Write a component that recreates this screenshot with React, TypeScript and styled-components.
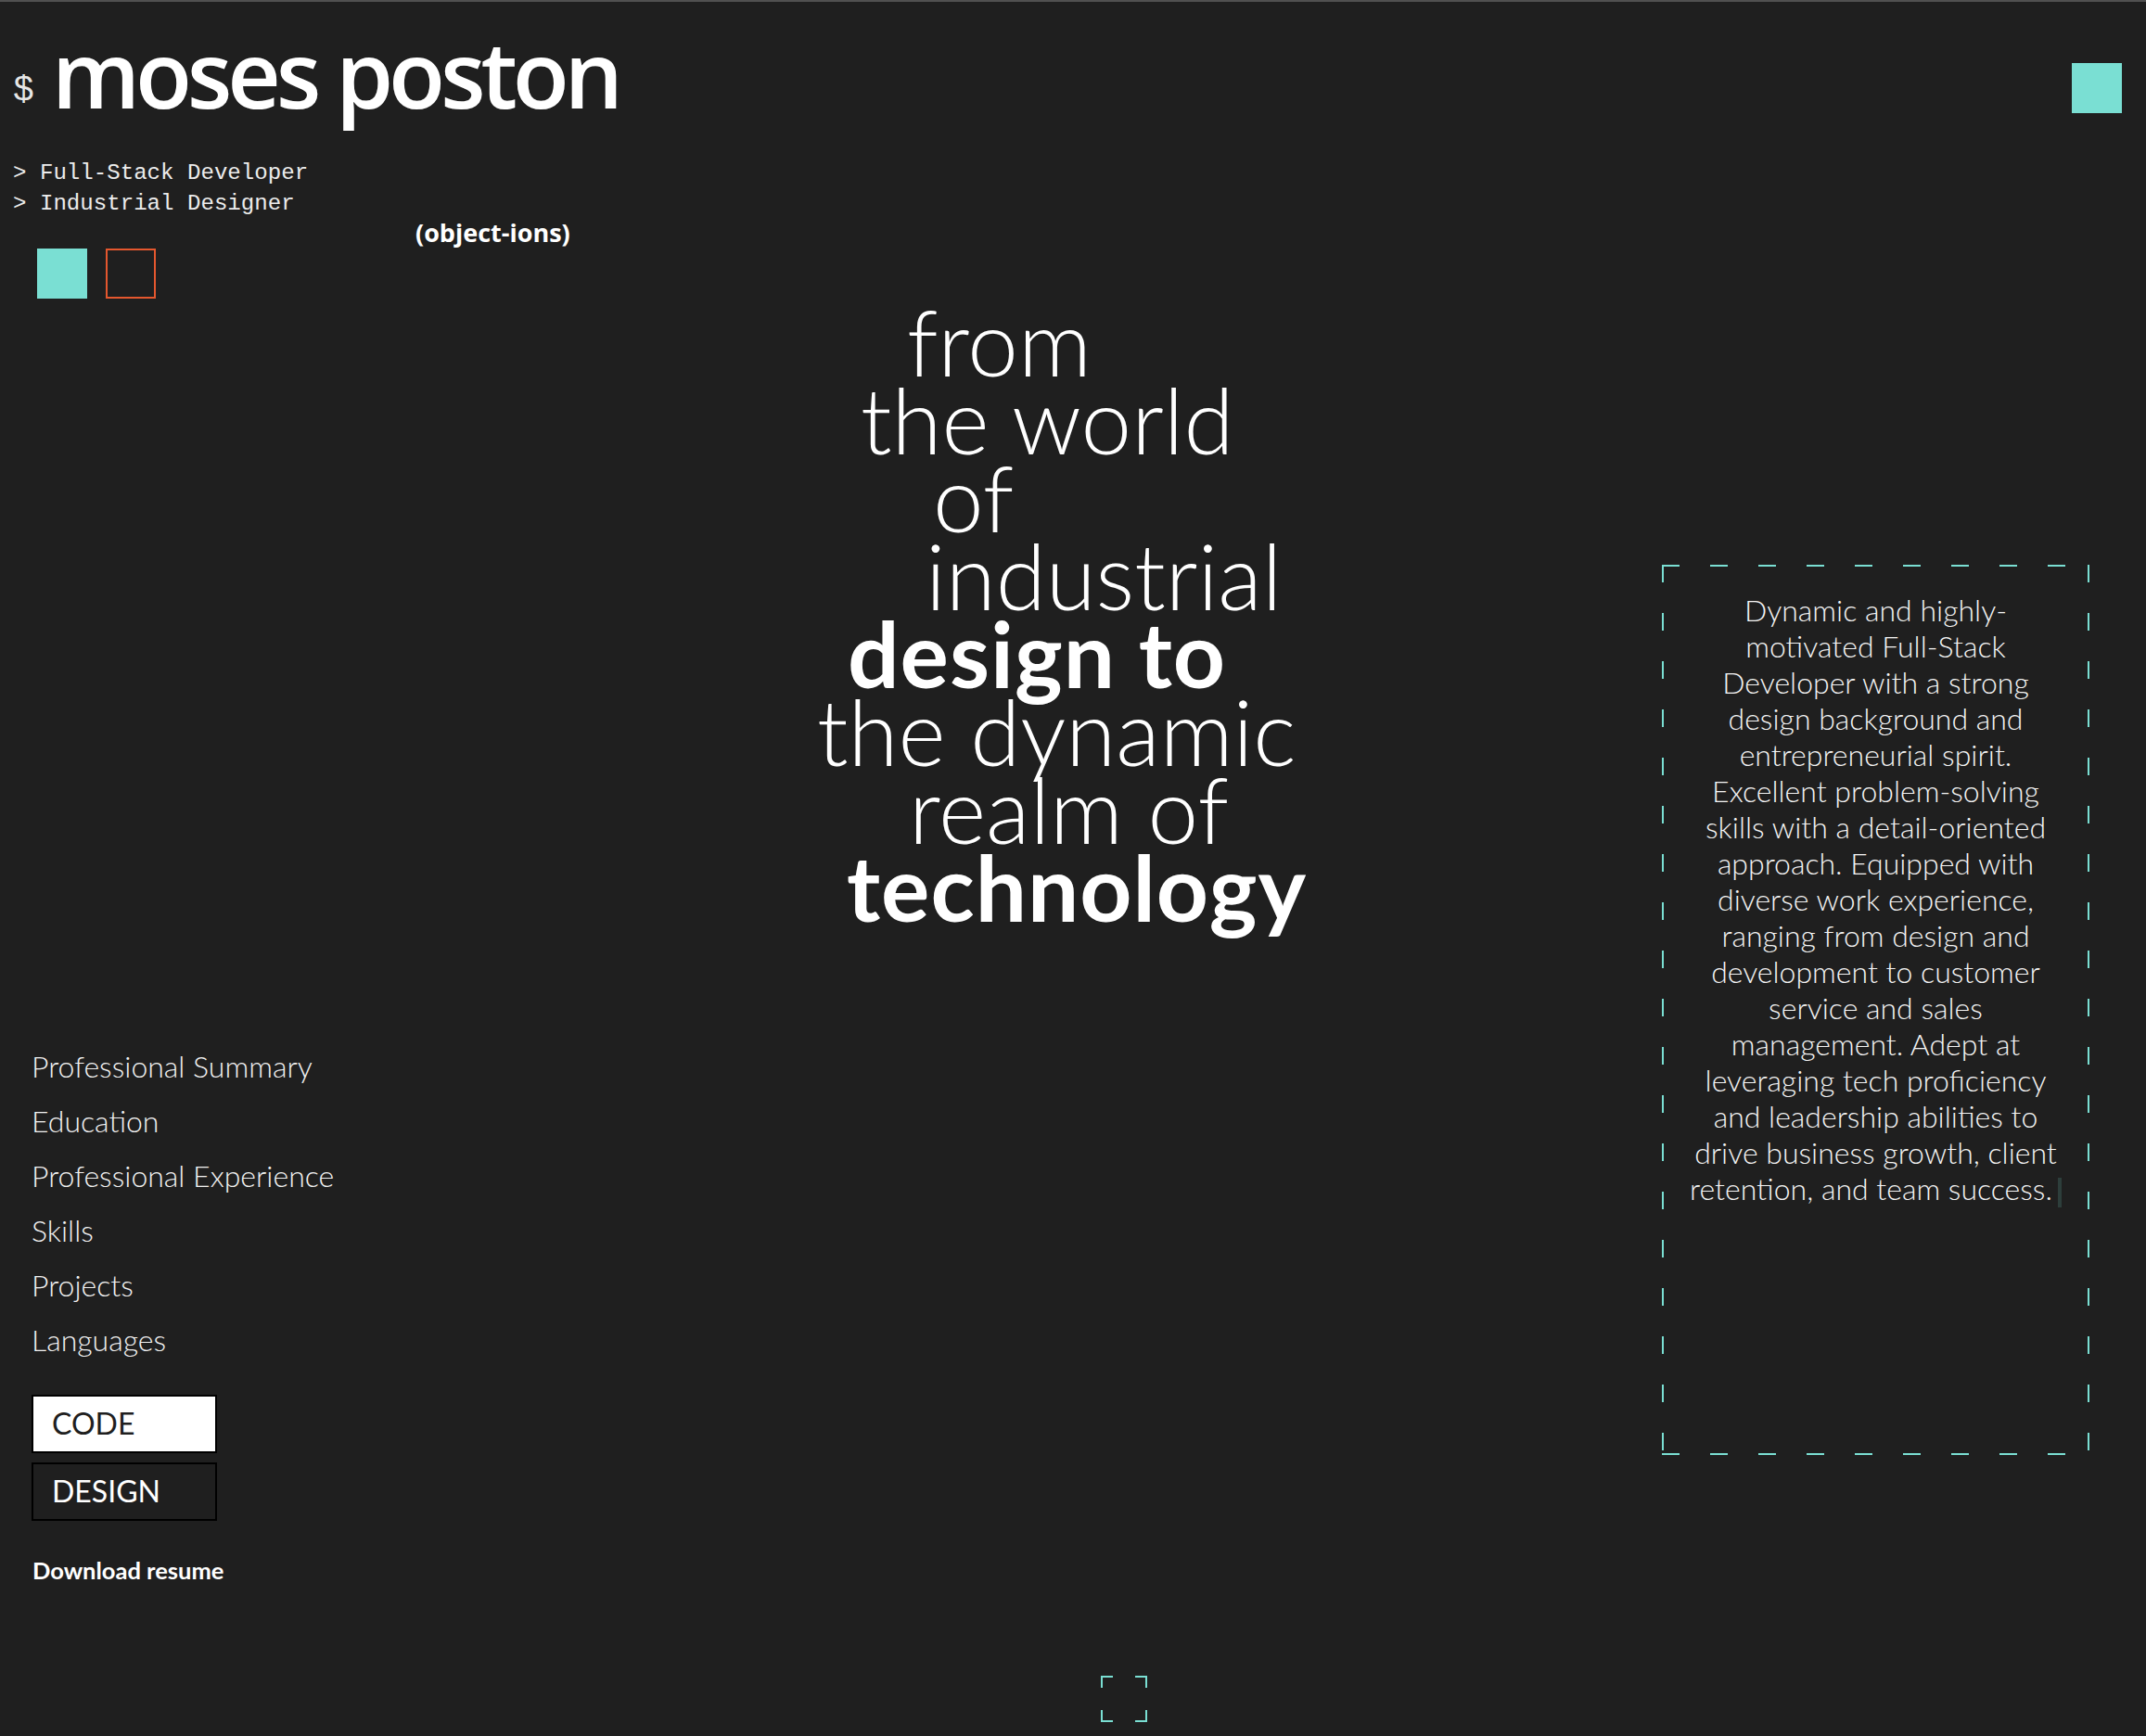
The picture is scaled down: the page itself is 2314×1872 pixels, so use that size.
import React from "react";
import styled, { createGlobalStyle } from "styled-components";

const TEAL = "#7adfd3";
const BG = "#1f1f1f";

const GlobalStyle = createGlobalStyle`
  html, body { margin: 0; padding: 0; background: ${BG}; }
  * { box-sizing: border-box; }
`;

const Page = styled.div`
  width: 2314px;
  min-height: 1872px;
  background: ${BG};
  border-top: 2px solid #505050;
  padding: 0 26px 0 14px;
  color: #fff;
  font-family: Lato, "Open Sans", sans-serif;
`;

const Header = styled.header`
  display: flex;
  justify-content: space-between;
  align-items: flex-start;
  padding-top: 26px;
  margin-bottom: 42px;
`;

const Title = styled.h1`
  margin: 0;
  height: 100px;
  font-family: "Open Sans", "Noto Sans", sans-serif;
  font-weight: 600;
  font-size: 100px;
  line-height: 100px;
  letter-spacing: -5.2px;
  color: #fff;
  white-space: nowrap;
`;

const Prompt = styled.span`
  font-family: "Liberation Mono", monospace;
  font-size: 38px;
  line-height: 1;
  font-weight: 400;
  letter-spacing: 0;
  vertical-align: 9px;
  margin-right: 19px;
  color: #e6e6e6;
`;

const CornerSquare = styled.div`
  width: 54px;
  height: 54px;
  margin-top: 40px;
  background: ${TEAL};
`;

const Main = styled.main`
  display: grid;
  grid-template-columns: 864px 1fr 461px;
  align-items: start;
  padding-right: 35px;
`;

const LeftCol = styled.div`
  display: flex;
  flex-direction: column;
  align-items: flex-start;
`;

const Roles = styled.pre`
  margin: 0;
  font-family: "Liberation Mono", monospace;
  font-size: 24.1px;
  line-height: 33px;
  color: #ececec;
`;

const Tagline = styled.div`
  margin-left: 434px;
  font-family: "Open Sans", "Noto Sans", sans-serif;
  font-weight: 700;
  font-size: 27px;
  line-height: 30px;
  letter-spacing: 0;
  color: #fff;
`;

const Swatches = styled.div`
  display: flex;
  gap: 20px;
  margin: 2px 0 0 26px;
`;

const Swatch = styled.div<{ $filled?: boolean }>`
  width: 54px;
  height: 54px;
  background: ${(p) => (p.$filled ? TEAL : "transparent")};
  border: ${(p) => (p.$filled ? "none" : "2px solid #e4572e")};
`;

const Nav = styled.nav`
  display: flex;
  flex-direction: column;
  margin: 798px 0 0 20px;
`;

const NavItem = styled.a`
  font-family: Lato, sans-serif;
  font-weight: 300;
  font-size: 32px;
  line-height: 59px;
  color: #f2f2f2;
  text-decoration: none;
  white-space: nowrap;
`;

const Modes = styled.div`
  display: flex;
  flex-direction: column;
  gap: 10px;
  margin: 30px 0 0 20px;
`;

const ModeButton = styled.button<{ $active?: boolean }>`
  width: 200px;
  height: 63px;
  display: flex;
  align-items: center;
  padding: 0 0 0 20px;
  border: 2px solid #000;
  background: ${(p) => (p.$active ? "#fff" : BG)};
  color: ${(p) => (p.$active ? "#1f1f1f" : "#fff")};
  font-family: Lato, sans-serif;
  font-weight: 400;
  font-size: 32px;
  line-height: 1.2;
  cursor: pointer;
`;

const Download = styled.a`
  margin: 38px 0 0 21px;
  font-family: Lato, sans-serif;
  font-weight: 700;
  font-size: 25.5px;
  line-height: 30px;
  color: #fff;
  text-decoration: none;
`;

const Hero = styled.div`
  margin-top: 156px;
  font-family: Lato, sans-serif;
  font-size: 98px;
  line-height: 84px;
  color: #fff;
`;

const HeroLine = styled.span<{ $indent: number; $bold?: boolean }>`
  display: block;
  margin-left: ${(p) => p.$indent}px;
  font-weight: ${(p) => (p.$bold ? 700 : 300)};
  letter-spacing: ${(p) => (p.$bold ? "1px" : "0")};
  white-space: nowrap;
`;

const dash = (dir: string) =>
  `linear-gradient(${dir}, ${TEAL} 19px, transparent 19px)`;

const Summary = styled.section`
  margin-top: 439px;
  width: 461px;
  height: 960px;
  padding-top: 29px;
  background:
    ${dash("to right")} 0 0 / 52px 2px repeat-x,
    ${dash("to right")} 0 100% / 52px 2px repeat-x,
    ${dash("to bottom")} 0 0 / 2px 52px repeat-y,
    ${dash("to bottom")} 100% 0 / 2px 52px repeat-y;
  text-align: center;
  font-family: Lato, sans-serif;
  font-weight: 300;
  font-size: 32px;
  line-height: 39px;
  color: #f4f4f4;
`;

const SummaryLine = styled.span`
  display: block;
  white-space: nowrap;
`;

const Cursor = styled.span`
  display: inline-block;
  width: 4px;
  height: 32px;
  margin-left: 6px;
  vertical-align: -8px;
  background: #2d3e3b;
`;

const Footer = styled.footer`
  display: flex;
  justify-content: center;
  margin-top: 99px;
`;

const FrameIcon = styled.svg`
  margin-left: 122px;
  display: block;
`;

const heroLines: { text: string; indent: number; bold?: boolean }[] = [
  { text: "from", indent: 100 },
  { text: "the world", indent: 50 },
  { text: "of", indent: 128 },
  { text: "industrial", indent: 120 },
  { text: "design to", indent: 36, bold: true },
  { text: "the dynamic", indent: 3 },
  { text: "realm of", indent: 102 },
  { text: "technology", indent: 35, bold: true },
];

const summaryLines = [
  "Dynamic and highly-",
  "motivated Full-Stack",
  "Developer with a strong",
  "design background and",
  "entrepreneurial spirit.",
  "Excellent problem-solving",
  "skills with a detail-oriented",
  "approach. Equipped with",
  "diverse work experience,",
  "ranging from design and",
  "development to customer",
  "service and sales",
  "management. Adept at",
  "leveraging tech proficiency",
  "and leadership abilities to",
  "drive business growth, client",
];

const navItems = [
  "Professional Summary",
  "Education",
  "Professional Experience",
  "Skills",
  "Projects",
  "Languages",
];

export default function App() {
  return (
    <>
      <GlobalStyle />
      <Page>
        <Header>
          <Title>
            <Prompt>$</Prompt>moses poston
          </Title>
          <CornerSquare />
        </Header>
        <Main>
          <LeftCol>
            <Roles>{"> Full-Stack Developer\n> Industrial Designer"}</Roles>
            <Tagline>(object-ions)</Tagline>
            <Swatches>
              <Swatch $filled />
              <Swatch />
            </Swatches>
            <Nav>
              {navItems.map((n) => (
                <NavItem key={n} href="#">
                  {n}
                </NavItem>
              ))}
            </Nav>
            <Modes>
              <ModeButton $active>CODE</ModeButton>
              <ModeButton>DESIGN</ModeButton>
            </Modes>
            <Download href="#">Download resume</Download>
          </LeftCol>
          <Hero>
            {heroLines.map((l) => (
              <HeroLine key={l.text} $indent={l.indent} $bold={l.bold}>
                {l.text}
              </HeroLine>
            ))}
          </Hero>
          <Summary>
            {summaryLines.map((s) => (
              <SummaryLine key={s}>{s}</SummaryLine>
            ))}
            <SummaryLine>
              retention, and team success.
              <Cursor />
            </SummaryLine>
          </Summary>
        </Main>
        <Footer>
          <FrameIcon width="50" height="50" viewBox="0 0 50 50" fill="none" stroke={TEAL} strokeWidth="2">
            <path d="M1 13V1h12M37 1h12v12M1 37v12h12M37 49h12V37" />
          </FrameIcon>
        </Footer>
      </Page>
    </>
  );
}
